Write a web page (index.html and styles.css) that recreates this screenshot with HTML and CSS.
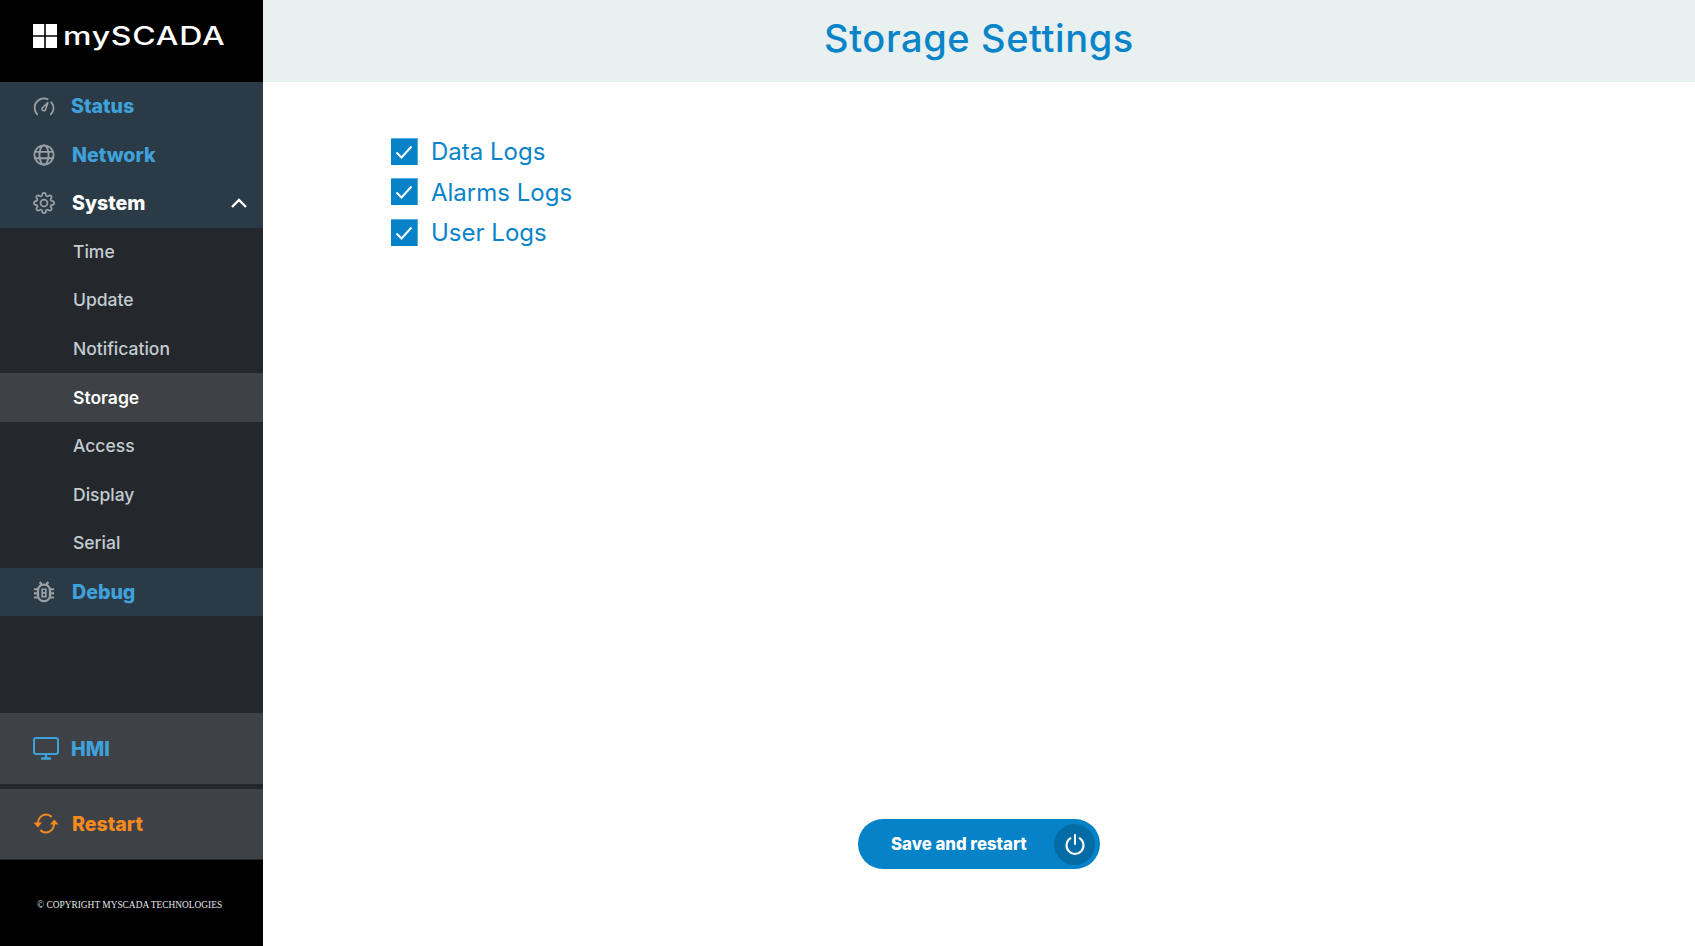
FILE: index.html
```html
<!DOCTYPE html>
<html lang="en">
<head>
<meta charset="utf-8">
<title>Storage Settings</title>
<link rel="stylesheet" href="styles.css">
</head>
<body>
<div class="app">
  <aside class="sidebar">
    <div class="brand">
      <svg class="brand-mark" viewBox="0 0 24 24"><path fill="#fff" d="M0 0h11.200v11.200H0zM12.800 0H24v11.200H12.800zM0 12.800h11.200V24H0zM12.800 12.800H24V24H12.800z"/></svg>
      <span class="brand-name">mySCADA</span>
    </div>
    <nav class="nav">
      <a class="nav-item nav-blue"><svg class="nav-icon" viewBox="0 0 24 24" fill="none" stroke="#9aa1a5" stroke-width="2" stroke-linecap="round"><path d="M4.500 21C.5 16.500 1 9.500 5.500 6c3.200-2.500 7-2.900 10.300-1.500M20 8c3.300 4 3 9.200-.5 13"/><path d="M9.800 14.500 16.500 8l-3 8.500a2.200 2.200 0 0 1-3.700-2z" stroke-width="1.700"/></svg><span class="nav-label status-label">Status</span></a>
      <a class="nav-item nav-blue"><svg class="nav-icon" viewBox="0 0 24 24" fill="none" stroke="#9aa1a5" stroke-width="2"><circle cx="12" cy="12" r="10.500"/><ellipse cx="12" cy="12" rx="5" ry="10.500"/><path d="M2.500 8.500h19M2.500 15.500h19"/></svg><span class="nav-label">Network</span></a>
      <a class="nav-item nav-blue nav-open"><svg class="nav-icon" viewBox="0 0 24 24" fill="none" stroke="#9aa1a5" stroke-width="1.900" stroke-linejoin="round"><circle cx="12" cy="12" r="3.800"/><path d="M19.400 15a1.650 1.650 0 0 0 .33 1.820l.06.06a2 2 0 0 1 0 2.830 2 2 0 0 1-2.830 0l-.06-.06a1.650 1.650 0 0 0-1.820-.33 1.650 1.650 0 0 0-1 1.510V21a2 2 0 0 1-2 2 2 2 0 0 1-2-2v-.09A1.650 1.650 0 0 0 9 19.400a1.650 1.650 0 0 0-1.820.33l-.06.06a2 2 0 0 1-2.830 0 2 2 0 0 1 0-2.830l.06-.06a1.650 1.650 0 0 0 .33-1.820 1.650 1.650 0 0 0-1.510-1H3a2 2 0 0 1-2-2 2 2 0 0 1 2-2h.09A1.650 1.650 0 0 0 4.600 9a1.650 1.650 0 0 0-.33-1.820l-.06-.06a2 2 0 0 1 0-2.830 2 2 0 0 1 2.830 0l.06.06a1.650 1.650 0 0 0 1.820.33H9a1.650 1.650 0 0 0 1-1.510V3a2 2 0 0 1 2-2 2 2 0 0 1 2 2v.09a1.650 1.650 0 0 0 1 1.510 1.650 1.650 0 0 0 1.820-.33l.06-.06a2 2 0 0 1 2.830 0 2 2 0 0 1 0 2.830l-.06.06a1.650 1.650 0 0 0-.33 1.820V9a1.650 1.650 0 0 0 1.510 1H21a2 2 0 0 1 2 2 2 2 0 0 1-2 2h-.09a1.650 1.650 0 0 0-1.510 1z"/></svg><span class="nav-label">System</span>
        <svg class="chevron" viewBox="0 0 16 10" fill="none" stroke="#fff" stroke-width="2.400"><path d="M1 9l7-7 7 7"/></svg></a>
      <div class="subnav">
        <a class="sub-item">Time</a>
        <a class="sub-item">Update</a>
        <a class="sub-item">Notification</a>
        <a class="sub-item sub-active">Storage</a>
        <a class="sub-item">Access</a>
        <a class="sub-item">Display</a>
        <a class="sub-item">Serial</a>
      </div>
      <a class="nav-item nav-blue"><svg class="nav-icon" viewBox="0 0 24 24" fill="none" stroke="#9aa1a5" stroke-width="2.400"><rect x="5.500" y="4" width="13" height="18" rx="6"/><path d="M7.500 1l2 3.500M16.500 1l-2 3.500M1 9h4.500M1 13.500h4.500M1 18h4.500M23 9h-4.500M23 13.500h-4.500M23 18h-4.500"/><path d="M10 9h4v8h-4zM10 13h4" stroke-width="1.800"/></svg><span class="nav-label">Debug</span></a>
    </nav>
    <div class="actions">
      <a class="action action-hmi"><svg class="action-icon" viewBox="0 0 26 23" fill="none" stroke="#3fa1da" stroke-width="2"><rect x="1" y="1" width="24" height="16" rx="2"/><path d="M13 17v3.500M8 21.500h10" stroke-width="2.400"/></svg><span class="action-label">HMI</span></a>
      <a class="action action-restart"><svg class="action-icon" viewBox="0 0 26 21" fill="none" stroke="#f58a1f" stroke-width="2"><path d="M4.800 10C5.200 5 8.800 1.500 13 1.500c2.300 0 4.300 1 5.700 2.500"/><path d="M21.200 11c-.4 5-4 8.500-8.200 8.500-2.300 0-4.300-1-5.700-2.500"/><path fill="#f58a1f" stroke="none" d="M.5 9.500H9l-4.200 5zM17 11.500h8.500L21.300 6.500z"/></svg><span class="action-label">Restart</span></a>
    </div>
    <footer class="copyright">© COPYRIGHT MYSCADA TECHNOLOGIES</footer>
  </aside>
  <main class="main">
    <header class="page-head"><h1 class="page-title">Storage Settings</h1></header>
    <section class="content">
      <div class="options">
        <label class="option"><span class="check"><svg viewBox="0 0 26 26" fill="none" stroke="#fff" stroke-width="2"><path d="M5.500 13.500l5 5 10-11"/></svg></span>Data Logs</label>
        <label class="option"><span class="check"><svg viewBox="0 0 26 26" fill="none" stroke="#fff" stroke-width="2"><path d="M5.500 13.500l5 5 10-11"/></svg></span>Alarms Logs</label>
        <label class="option"><span class="check"><svg viewBox="0 0 26 26" fill="none" stroke="#fff" stroke-width="2"><path d="M5.500 13.500l5 5 10-11"/></svg></span>User Logs</label>
      </div>
      <div class="button-row">
        <button class="save-btn"><span class="save-text">Save and restart</span><span class="save-icon"><svg viewBox="0 0 24 24" fill="none" stroke="#fff" stroke-width="2" stroke-linecap="round"><path d="M12 3v9M7.500 6.200a8.500 8.500 0 1 0 9 0"/></svg></span></button>
      </div>
    </section>
  </main>
</div>
</body>
</html>
```
FILE: styles.css
```css
* { box-sizing: border-box; }
html, body { margin: 0; height: 100%; }
body { font-family: Inter, "Open Sans", sans-serif; background: #fff; overflow: hidden; }
.app { display: flex; height: 946px; }

.sidebar { width: 263px; flex: none; display: flex; flex-direction: column; background: #24282c; }
.brand { height: 82px; background: #000; display: flex; align-items: center; padding: 0 0 11px 33px; gap: 6px; }
.brand-mark { width: 24px; height: 24px; }
.brand-name { color: #fff; font-size: 25px; font-weight: 500; letter-spacing: .6px; transform: scaleX(1.28); transform-origin: left center; }

.nav { display: flex; flex-direction: column; }
.nav-item { height: 48.500px; background: #2a3a46; display: flex; align-items: center; padding-left: 33px; }
.nav-icon { width: 22px; height: 22px; flex: none; }
.nav-label { margin-left: 17px; font-size: 19.600px; font-weight: 800; color: #3fa1da; }
.status-label { margin-left: 16px; }
.nav-open .nav-label { color: #fff; }
.chevron { width: 16px; height: 10px; margin-left: auto; margin-right: 16px; }

.subnav { display: flex; flex-direction: column; }
.sub-item { height: 48.600px; display: flex; align-items: center; padding-left: 73px; padding-bottom: 1px; font-size: 17.500px; font-weight: 500; color: #c3ccd2; }
.sub-active { background: #3e4146; color: #fff; font-weight: 600; }

.actions { margin-top: 97px; display: flex; flex-direction: column; gap: 5px; }
.action { height: 71px; background: #3e4146; display: flex; align-items: center; padding-left: 33px; }
.action-icon { width: 26px; height: 23px; flex: none; }
.action-label { margin-left: 12px; font-size: 19.600px; font-weight: 800; }
.action-hmi .action-label { color: #3fa1da; }
.action-restart { height: 70px; padding-bottom: 1px; }
.action-restart .action-label { color: #f58a1f; margin-left: 13px; }

.copyright { flex: 1; background: #000; border-top: 1px solid #24282c; display: flex; align-items: center; padding: 3px 0 0 37px; font-family: "Liberation Serif", serif; font-size: 9.400px; color: #e4e8ea; white-space: nowrap; }

.main { flex: 1; display: flex; flex-direction: column; min-width: 0; }
.page-head { height: 82px; background: #e9f0f0; display: flex; align-items: center; justify-content: center; padding-bottom: 7px; }
.page-title { margin: 0; font-size: 38px; font-weight: 500; letter-spacing: .6px; color: #0a84c9; }

.content { flex: 1; display: flex; flex-direction: column; padding: 56.500px 0 77px 128px; }
.options { display: flex; flex-direction: column; gap: 14.500px; }
.option { display: flex; align-items: center; gap: 13px; height: 26px; font-size: 24px; color: #0a84c9; }
.check { width: 27px; height: 27px; flex: none; margin-top: -1px; background: #0582c8; border: 1px solid #55aee0; border-width: 1px 1px 0 0; display: block; }
.check svg { display: block; width: 26px; height: 26px; }

.button-row { margin-top: auto; padding-right: 128px; display: flex; justify-content: center; }
.save-btn { width: 242px; height: 50px; border: 0; border-radius: 25px; background: #0582c8; padding: 4px 5px 4px 33px; display: flex; align-items: center; justify-content: space-between; font: inherit; }
.save-text { color: #fff; font-size: 16.800px; font-weight: 800; white-space: nowrap; }
.save-icon { width: 41px; height: 41px; border-radius: 50%; background: #046ba5; display: flex; align-items: center; justify-content: center; }
.save-icon svg { width: 24px; height: 24px; }
```
